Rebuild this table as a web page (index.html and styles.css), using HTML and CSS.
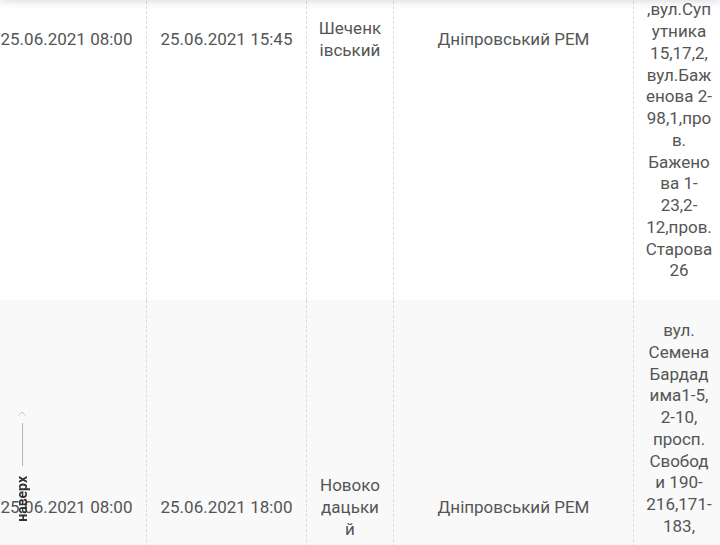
FILE: index.html
```html
<!DOCTYPE html>
<html lang="uk">
<head>
<meta charset="utf-8">
<title>Графік відключень</title>
<link rel="stylesheet" href="styles.css">
</head>
<body>
<header class="site-header"></header>
<main class="table-wrap">
  <table class="outages">
    <colgroup>
      <col class="col-date">
      <col class="col-date">
      <col class="col-district">
      <col class="col-rem">
      <col class="col-addr">
    </colgroup>
    <tbody>
      <tr class="row row-first">
        <td>25.06.2021 08:00</td>
        <td>25.06.2021 15:45</td>
        <td>Шеченківський</td>
        <td>Дніпровський РЕМ</td>
        <td class="addr addr-bottom">,вул.Суп<wbr>утника 15,17,2, вул.Баж<wbr>енова 2-98,1,про<wbr>в. Бажено<wbr>ва 1-23,2-12,пров. Старова 26</td>
      </tr>
      <tr class="row row-second">
        <td>25.06.2021 08:00</td>
        <td>25.06.2021 18:00</td>
        <td>Новокодацький</td>
        <td>Дніпровський РЕМ</td>
        <td class="addr addr-top">вул. Семена Бардад<wbr>има1-5, 2-10, просп. Свобод<wbr>и 190-216,171-183,</td>
      </tr>
    </tbody>
  </table>
</main>
<a class="to-top" href="#">
  <svg class="to-top-chev" width="8" height="5" viewBox="0 0 8 5"><polyline points="0.5,4.5 4,1 7.5,4.5" fill="none" stroke="#c4c4c4" stroke-width="1"/></svg>
  <span class="to-top-line"></span>
  <span class="to-top-label">наверх</span>
</a>
</body>
</html>
```
FILE: styles.css
```css
html, body {
  margin: 0;
  padding: 0;
  background: #fff;
  overflow: hidden;
}
body {
  font-family: Roboto, "Liberation Sans", sans-serif;
  color: #555;
}
.site-header {
  position: fixed;
  top: -40px;
  left: 0;
  right: 0;
  height: 40px;
  background: #fff;
  box-shadow: 0 0 10px rgba(0, 0, 0, 0.18);
  z-index: 5;
}
.table-wrap {
  margin: -220px 0 0 -13px;
}
.outages {
  table-layout: fixed;
  border-collapse: separate;
  border-spacing: 0;
  width: 737px;
  font-size: 17px;
  line-height: 1.28;
}
.col-date { width: 160px; }
.col-district { width: 87px; }
.col-rem { width: 240px; }
.col-addr { width: 90px; }
.outages td {
  padding: 20px 11px;
  text-align: center;
  vertical-align: middle;
  border-right: 1px dashed #dcdcdc;
  overflow-wrap: break-word;
}
.outages td:last-child {
  border-right: 0;
}
.outages td.addr {
  overflow-wrap: normal;
}
.row-first { height: 520px; }
.row-second { height: 416px; background: #f9f9f9; }
.outages td.addr-bottom { vertical-align: bottom; padding-bottom: 18px; }
.outages td.addr-top { vertical-align: top; }
.to-top {
  position: fixed;
  left: 14px;
  top: 411px;
  width: 16px;
  display: flex;
  flex-direction: column;
  align-items: center;
  text-decoration: none;
  z-index: 6;
}
.to-top-chev {
  display: block;
}
.to-top-line {
  display: block;
  width: 1px;
  height: 43px;
  margin-top: 7px;
  background: #b5b5b5;
}
.to-top-label {
  margin-top: 10px;
  writing-mode: vertical-rl;
  transform: rotate(180deg);
  font: 700 14px/16px Roboto, "Liberation Sans", sans-serif;
  color: #333;
}
```
